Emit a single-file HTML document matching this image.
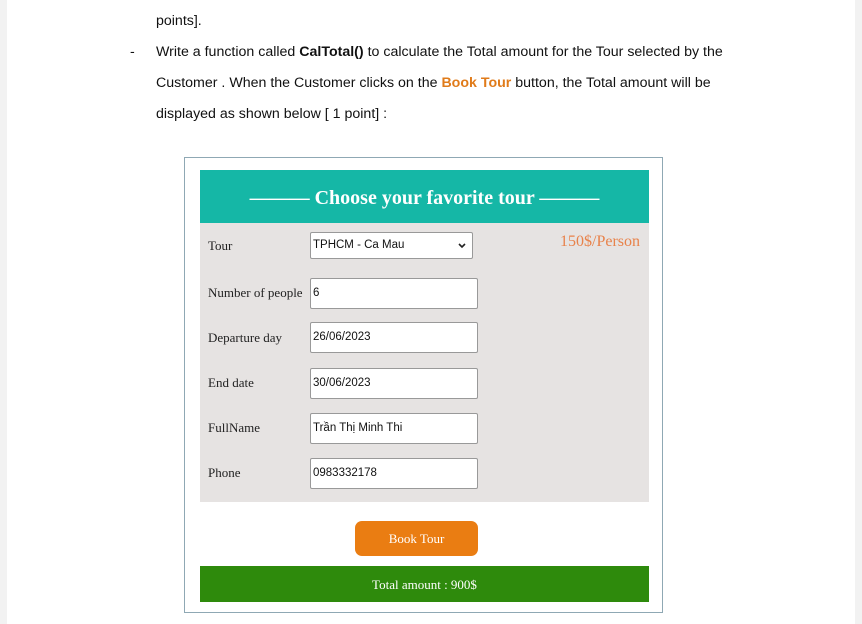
<!DOCTYPE html>
<html><head><meta charset="utf-8"><style>
body{margin:0;width:862px;height:624px;background:#fff;position:relative;overflow:hidden;font-family:"Liberation Sans",sans-serif}
.edge{position:absolute;top:0;bottom:0;width:7px;background:#f2f2f2}
.t{position:absolute;left:156px;font-size:14.2px;color:#111;letter-spacing:0px;white-space:nowrap}
.s{font-family:"Liberation Serif",serif;position:absolute}
.lab{left:208px;font-size:13px;color:#222}
.in{position:absolute;left:310px;width:168px;height:31px;border:1px solid #999;background:#fff;box-sizing:border-box;border-radius:2px;font-size:11.5px;line-height:29px;padding-left:2px;color:#111}
</style></head><body>
<div class="edge" style="left:0"></div><div class="edge" style="right:0"></div>
<div class="t" style="top:13px">points].</div>
<div class="t" style="left:130px;top:44px">-</div>
<div class="t" style="top:44px">Write a function called <b>CalTotal()</b> to calculate the Total amount for the Tour selected by the</div>
<div class="t" style="top:75px">Customer . When the Customer clicks on the <b style="color:#e07b1a">Book Tour</b> button, the Total amount will be</div>
<div class="t" style="top:106px">displayed as shown below [ 1 point] :</div>

<div style="position:absolute;left:184px;top:157px;width:479px;height:456px;border:1px solid #8fa8b4;box-sizing:border-box"></div>
<div style="position:absolute;left:200px;top:170px;width:449px;height:53px;background:#15b7a6"></div>
<div class="s" style="left:200px;width:449px;top:187px;text-align:center;color:#fff;font-size:20px;font-weight:bold">——— Choose your favorite tour ———</div>
<div style="position:absolute;left:200px;top:223px;width:449px;height:279px;background:#e6e3e2"></div>
<div class="s lab" style="top:238px">Tour</div>
<div class="s lab" style="top:285px">Number of people</div>
<div class="s lab" style="top:330px">Departure day</div>
<div class="s lab" style="top:375px">End date</div>
<div class="s lab" style="top:420px">FullName</div>
<div class="s lab" style="top:465px">Phone</div>
<div class="s" style="left:560px;top:233px;font-size:16px;color:#e8824a">150$/Person</div>
<div class="in" style="top:232px;width:163px;height:27px;line-height:25px">TPHCM - Ca Mau<svg style="position:absolute;right:6px;top:10px" width="8" height="6"><path d="M1 1L4 4L7 1" stroke="#222" stroke-width="1.6" fill="none"/></svg></div>
<div class="in" style="top:278px">6</div>
<div class="in" style="top:322px">26/06/2023</div>
<div class="in" style="top:368px">30/06/2023</div>
<div class="in" style="top:413px">Trần Thị Minh Thi</div>
<div class="in" style="top:458px">0983332178</div>
<div style="position:absolute;left:355px;top:521px;width:123px;height:35px;background:#ea7d12;border-radius:7px"></div>
<div class="s" style="left:355px;width:123px;top:531px;text-align:center;color:#fff;font-size:13px">Book Tour</div>
<div style="position:absolute;left:200px;top:566px;width:449px;height:36px;background:#2e8a0c"></div>
<div class="s" style="left:200px;width:449px;top:577px;text-align:center;color:#fff;font-size:13px">Total amount : 900$</div>
</body></html>
